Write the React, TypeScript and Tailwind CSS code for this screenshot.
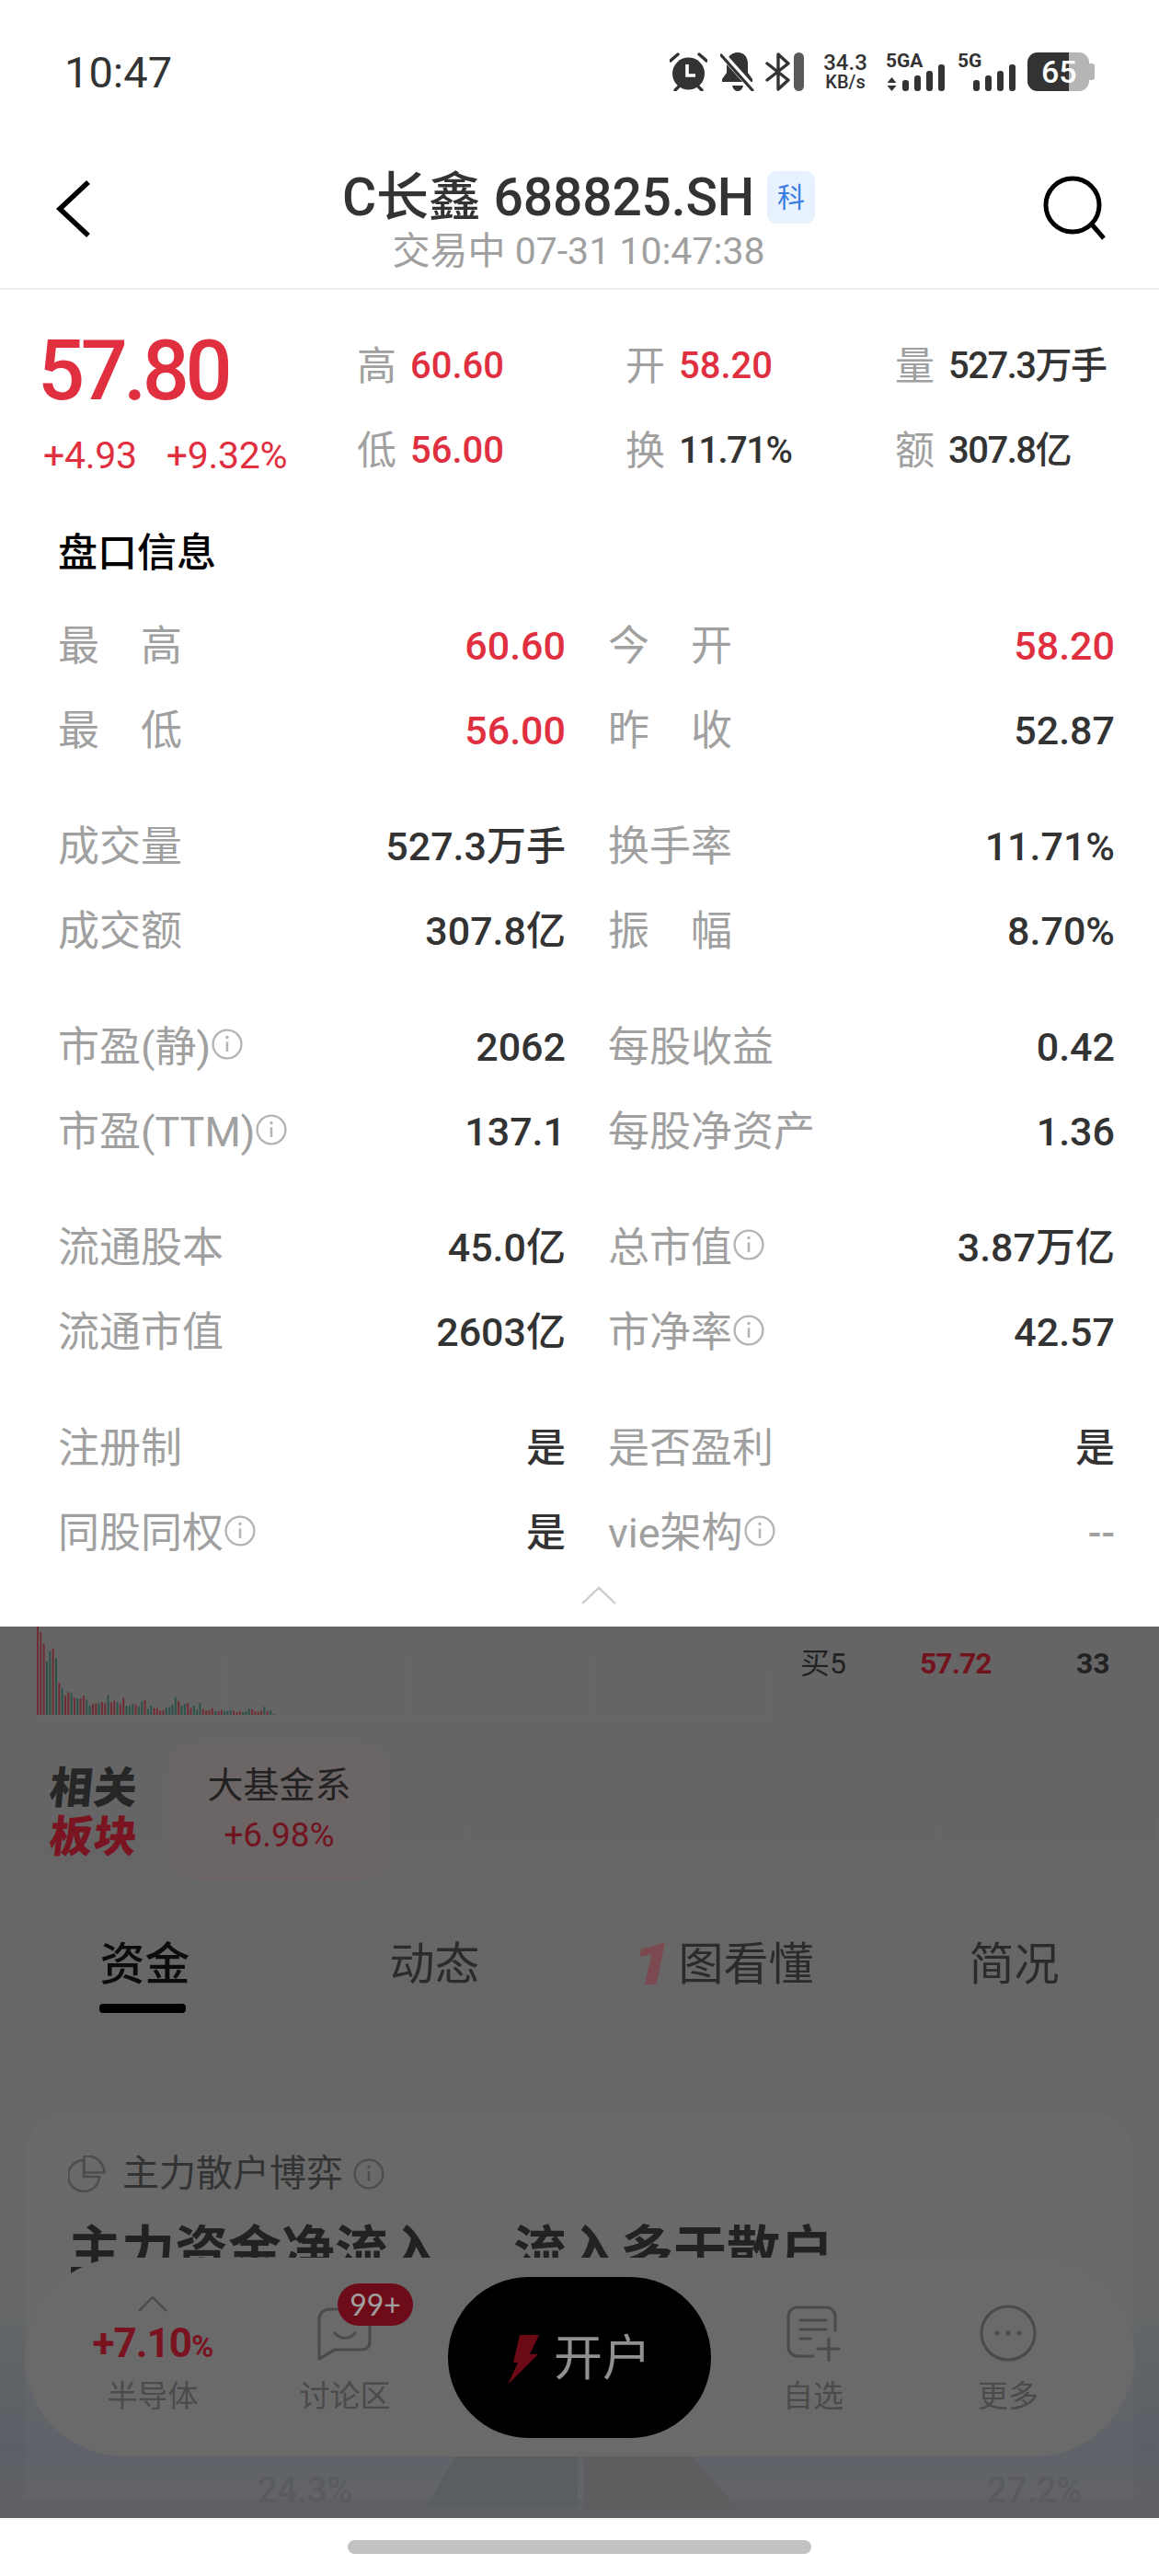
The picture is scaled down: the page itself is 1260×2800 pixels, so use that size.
import React from 'react'

const RED = 'text-[#e0303f]'

type Cell = { label: string; value: string; tip?: boolean; red?: boolean; muted?: boolean }

const groups: Cell[][] = [
  [
    { label: '最　高', value: '60.60', red: true },
    { label: '今　开', value: '58.20', red: true },
    { label: '最　低', value: '56.00', red: true },
    { label: '昨　收', value: '52.87' },
  ],
  [
    { label: '成交量', value: '527.3万手' },
    { label: '换手率', value: '11.71%' },
    { label: '成交额', value: '307.8亿' },
    { label: '振　幅', value: '8.70%' },
  ],
  [
    { label: '市盈(静)', value: '2062', tip: true },
    { label: '每股收益', value: '0.42' },
    { label: '市盈(TTM)', value: '137.1', tip: true },
    { label: '每股净资产', value: '1.36' },
  ],
  [
    { label: '流通股本', value: '45.0亿' },
    { label: '总市值', value: '3.87万亿', tip: true },
    { label: '流通市值', value: '2603亿' },
    { label: '市净率', value: '42.57', tip: true },
  ],
  [
    { label: '注册制', value: '是' },
    { label: '是否盈利', value: '是' },
    { label: '同股同权', value: '是', tip: true },
    { label: 'vie架构', value: '--', tip: true, muted: true },
  ],
]

// volume bars read off the chart: [height, r/g]
const volume: [number, string][] = [
  [296, 'r'], [270, 'r'], [232, 'r'], [175, 'g'], [208, 'g'], [217, 'r'], [184, 'g'], [105, 'r'], [86, 'g'], [62, 'r'],
  [74, 'r'], [70, 'g'], [56, 'r'], [53, 'g'], [53, 'r'], [62, 'r'], [50, 'g'], [30, 'g'], [35, 'r'], [38, 'r'],
  [38, 'g'], [42, 'r'], [38, 'r'], [65, 'g'], [40, 'r'], [46, 'r'], [42, 'g'], [35, 'r'], [56, 'r'], [30, 'g'],
  [30, 'g'], [36, 'g'], [34, 'r'], [28, 'g'], [44, 'g'], [48, 'r'], [20, 'g'], [30, 'g'], [22, 'r'], [22, 'r'],
  [15, 'r'], [15, 'r'], [24, 'g'], [26, 'g'], [33, 'g'], [58, 'g'], [45, 'r'], [30, 'g'], [36, 'g'], [38, 'r'],
  [22, 'r'], [30, 'g'], [18, 'g'], [38, 'g'], [18, 'r'], [14, 'r'], [16, 'r'], [22, 'r'], [12, 'g'], [12, 'r'],
  [16, 'r'], [12, 'g'], [12, 'g'], [16, 'g'], [14, 'r'], [9, 'r'], [12, 'r'], [9, 'g'], [12, 'g'], [20, 'g'],
  [18, 'r'], [12, 'r'], [9, 'r'], [14, 'r'], [26, 'g'], [12, 'r'], [14, 'g'], [3, 'g'],
]

const InfoIcon = ({ size = 32, color = '#b4b4b4' }: { size?: number; color?: string }) => (
  <svg width={size} height={size} viewBox="0 0 32 32" fill="none" stroke={color} className="shrink-0">
    <circle cx="16" cy="16" r="14.5" strokeWidth="2.2" />
    <path d="M16 13.5v10" strokeWidth="2.4" />
    <circle cx="16" cy="9" r="1.6" fill={color} stroke="none" />
  </svg>
)

const Signal = ({ label, arrows }: { label: string; arrows?: boolean }) => {
  const x0 = arrows ? 18 : 17
  const w = arrows ? 64 : 63
  return (
    <svg width={w} height="46" viewBox={`0 -4 ${w} 46`} fill="#333" className="-mt-[4px] [font-family:Roboto,sans-serif]">
      <text x="0" y="16" fontSize="21" fontWeight="700">{label}</text>
      {arrows && <path d="M6.5 27l5 6h-10zM6.5 42l-5-6h10z" />}
      {[30, 25, 20, 13].map((top, i) => (
        <rect key={i} x={x0 + i * 13} y={top} width="7" height={42 - top} rx="3" />
      ))}
    </svg>
  )
}

const StatusBar = () => (
  <div className="h-[156px] flex items-center pl-[70px] pr-[70px] text-[#333]">
    <span className="text-[47px] leading-none">10:47</span>
    <div className="ml-auto flex items-center h-[42px]">
      <svg width="41" height="42" viewBox="0 0 41 42" fill="#333">
        <circle cx="20.5" cy="23" r="17.5" />
        <path d="M1 9l8-7M40 9l-8-7M6 41l5-5M35 41l-5-5" stroke="#333" strokeWidth="3.4" strokeLinecap="round" />
        <path d="M19 13v12h9" fill="none" stroke="#fff" strokeWidth="3.6" />
      </svg>
      <svg width="38" height="42" viewBox="0 0 38 42" fill="#333" className="ml-[14px]">
        <path d="M19 0c7 0 11 5 11 12v10l5 7v3H2v-3l5-7V12C7 5 12 0 19 0z" />
        <path d="M13 36h12c-1 4-3 6-6 6s-5-2-6-6z" />
        <path d="M2 2l34 38" stroke="#fff" strokeWidth="7" />
        <path d="M1 3l34 38" stroke="#333" strokeWidth="3.2" strokeLinecap="round" />
      </svg>
      <svg width="27" height="42" viewBox="0 0 27 42" fill="none" stroke="#333" strokeWidth="3.4" strokeLinecap="round" strokeLinejoin="round" className="ml-[11px]">
        <path d="M2 12l23 18-11 10V2l11 10L2 30" />
      </svg>
      <div className="ml-[4px] w-[11px] h-[42px] rounded-full bg-[#5a5a5a]" />
      <div className="ml-[20px] w-[50px] flex flex-col items-center [font-family:Roboto,sans-serif] font-medium">
        <span className="text-[24px] leading-[23px]">34.3</span>
        <span className="text-[20px] leading-[19px]">KB/s</span>
      </div>
      <div className="ml-[19px]"><Signal label="5GA" arrows /></div>
      <div className="ml-[14px]"><Signal label="5G" /></div>
      <div className="ml-[13px] flex items-center">
        <div className="relative w-[67px] h-[42px] rounded-[11px] overflow-hidden bg-[#b5b5b5] flex">
          <div className="w-[45px] bg-[#333]" />
          <span className="absolute left-[15px] top-0 h-[42px] flex items-center text-[34px] font-medium text-white leading-none">65</span>
        </div>
        <div className="w-[6px] h-[18px] rounded-r-[3px] bg-[#b5b5b5]" />
      </div>
    </div>
  </div>
)

const Header = () => (
  <div className="h-[159px] border-b-[2px] border-[#eeeeee] flex pl-[60px] pr-[58px]">
    <svg width="40" height="64" viewBox="0 0 40 64" fill="none" stroke="#000" strokeWidth="5.5" className="mt-[39px] shrink-0">
      <path d="M36 3L5 32l31 29" />
    </svg>
    <div className="flex-1 flex flex-col items-center pt-[30px]">
      <div className="flex items-center h-[57px] ml-[24px]">
        <span className="text-[57px] leading-none font-medium text-[#333] tracking-[-0.2px]">C长鑫 688825.SH</span>
        <span className="ml-[14px] w-[52px] h-[57px] rounded-[10px] bg-[#e8f1fe] flex items-center justify-center text-[30px] text-[#3a7de0]">科</span>
      </div>
      <span className="mt-[8px] text-[41px] leading-[44px] text-[#a0a0a0] ml-[24px]">交易中 07-31 10:47:38</span>
    </div>
    <svg width="68" height="70" viewBox="0 0 68 70" fill="none" stroke="#000" strokeWidth="5" className="mt-[35px] shrink-0">
      <circle cx="32" cy="32" r="29" />
      <path d="M53 53l13 15" />
    </svg>
  </div>
)

const Stat = ({ label, value, red, small }: { label: string; value: string; red?: boolean; small?: boolean }) => (
  <div className="h-[92px] flex items-center">
    <span className="w-[58px] text-[43px] text-[#a0a0a0] leading-none">{label}</span>
    <span className={`text-[40px] font-medium leading-none ${red ? RED : 'text-[#333]'} ${small ? 'tracking-[-1.5px]' : ''}`}>{value}</span>
  </div>
)

const Quote = () => (
  <div className="pt-[37px] pl-[41px] flex">
    <div className="w-[347px] shrink-0">
      <div className={`h-[100px] flex items-center mt-[2px] text-[90px] leading-none font-medium tracking-[-4.5px] ${RED}`}>57.80</div>
      <div className={`mt-[6px] h-[71px] flex items-center pl-[6px] gap-[32px] text-[41px] leading-none -tracking-[0.3px] ${RED}`}>
        <span>+4.93</span>
        <span>+9.32%</span>
      </div>
    </div>
    <div className="grid grid-cols-[292px_293px_1fr] flex-1">
      <Stat label="高" value="60.60" red />
      <Stat label="开" value="58.20" red />
      <Stat label="量" value="527.3万手" small />
      <Stat label="低" value="56.00" red />
      <Stat label="换" value="11.71%" small />
      <Stat label="额" value="307.8亿" small />
    </div>
  </div>
)

const Row = ({ cell }: { cell: Cell }) => (
  <div className="h-[92.5px] flex items-center justify-between">
    <div className="flex items-center text-[#a0a0a0] text-[45px] leading-none">
      <span>{cell.label}</span>
      {cell.tip && (
        <span className="ml-[1px] -mt-[6px]">
          <InfoIcon size={34} />
        </span>
      )}
    </div>
    <span className={`text-[43px] leading-none font-medium ${cell.red ? RED : cell.muted ? 'text-[#a0a0a0]' : 'text-[#333]'}`}>
      {cell.value}
    </span>
  </div>
)

const Table = () => (
  <div className="pl-[63px] pr-[48px]">
    <h2 className="h-[60px] mt-[35px] flex items-center text-[43px] font-medium text-black leading-none">盘口信息</h2>
    <div className="mt-[25px] flex flex-col gap-[33px]">
      {groups.map((cells, i) => (
        <div key={i} className="grid grid-cols-[552px_551px] gap-x-[46px]">
          {cells.map((c, j) => (
            <Row key={j} cell={c} />
          ))}
        </div>
      ))}
    </div>
    <div className="h-[41px] flex items-center justify-center ml-[26px]">
      <svg width="38" height="20" viewBox="0 0 38 20" fill="none" stroke="#cccccc" strokeWidth="2.4">
        <path d="M1 19L19 2l18 17" />
      </svg>
    </div>
  </div>
)

const VolumeChart = () => (
  <svg width="800" height="97" viewBox="0 0 800 97" className="shrink-0">
    {[200, 400, 600, 799].map((x) => (
      <rect key={x} x={x} y="0" width="1" height="96" fill="#686868" />
    ))}
    <rect x="0" y="96" width="800" height="1" fill="#686868" />
    {volume.map(([h, c], i) => (
      <rect key={i} x={i * 3.33} y={96 - h / 3} width="2" height={h / 3} fill={c === 'r' ? '#6f2c33' : '#2c5148'} />
    ))}
  </svg>
)

const Tabs = () => (
  <div className="grid grid-cols-4 items-start justify-items-center pt-[38px] h-[222px] text-[49px] leading-[50px] text-[#2b2b2b]">
    <div className="flex flex-col items-center">
      <span className="text-[#0c0c0c] font-medium">资金</span>
      <div className="mt-[17px] mr-[6px] w-[94px] h-[10px] rounded-[4px] bg-black" />
    </div>
    <span>动态</span>
    <span className="flex items-center whitespace-nowrap">
      <span className="inline-block scale-x-125 text-[62px] font-black italic text-[#7b4a50] mr-[12px] leading-[50px] [font-family:Roboto,sans-serif]">1</span>
      图看懂
    </span>
    <span>简况</span>
  </div>
)

const FundCard = () => (
  <div className="mx-[27px] rounded-t-[50px] h-[420px] bg-[#ffffff05] pl-[47px] pt-[48px] overflow-hidden">
    <div className="flex items-center h-[40px] text-[40px] leading-none text-[#333]">
      <svg width="41" height="40" viewBox="0 0 41 40" fill="none" stroke="#4d4d4d" strokeWidth="2.6" className="shrink-0">
        <path d="M17 5A17 17 0 1 0 34 23H17z" />
        <path d="M17.5 1v18h22A19 19 0 0 0 24 1z" transform="translate(0 -0.5)" />
      </svg>
      <span className="ml-[18px]">主力散户博弈</span>
      <span className="ml-[11px]">
        <InfoIcon size={34} color="#4d4d4d" />
      </span>
    </div>
    <div className="mt-[34px] text-[58px] leading-[60px] font-bold text-[#222] whitespace-nowrap">
      主力资金净流入<span className="ml-[78px]">流入多于散户</span>
    </div>
  </div>
)

const NavItem = ({ label, children }: { label: string; children: React.ReactNode }) => (
  <div className="flex flex-col items-center">
    <div className="h-[112px] flex items-center justify-center">{children}</div>
    <span className="text-[33px] leading-[36px] text-[#4b4b4b]">{label}</span>
  </div>
)

const BottomBar = () => (
  <div className="absolute left-[27px] top-[686px] w-[1206px] h-[216px] rounded-[108px] bg-[#6a6a6a] flex items-start pt-[21px]">
    <div className="w-[460px] shrink-0 flex">
      <div className="w-[278px] flex justify-center">
        <NavItem label="半导体">
          <div className="flex flex-col items-center pt-[6px]">
            <svg width="32" height="18" viewBox="0 0 32 18" fill="none" stroke="#4b4b4b" strokeWidth="2.4">
              <path d="M1 17L16 2l15 15" />
            </svg>
            <span className="mt-[12px] text-[44px] leading-[44px] font-bold text-[#7a1320] tracking-[-1px] whitespace-nowrap">
              +7.10<span className="text-[33px]">%</span>
            </span>
          </div>
        </NavItem>
      </div>
      <div className="relative w-[140px] flex justify-center">
        <NavItem label="讨论区">
          <svg width="62" height="60" viewBox="0 0 62 60" fill="none" stroke="#4b4b4b" strokeWidth="3.2" strokeLinecap="round" strokeLinejoin="round" className="mt-[12px]">
            <path d="M14 3h36a8 8 0 0 1 8 8v28a8 8 0 0 1-8 8H20L3 57V14a11 11 0 0 1 11-11z" />
            <path d="M20 29c6 7 16 7 22 0" />
          </svg>
        </NavItem>
        <div className="absolute left-[62px] top-[7px] w-[82px] h-[46px] rounded-full bg-[#6d0c18] flex items-center justify-center text-[32px] leading-none text-[#a0a0a0] [font-family:Lato,sans-serif]">
          99+
        </div>
      </div>
    </div>
    <div className="w-[286px] h-[175px] rounded-[88px] bg-black flex items-center justify-center gap-[16px] shrink-0 pt-[4px] pl-[10px]">
      <svg width="34" height="54" viewBox="0 0 34 54" fill="#6b0a15" className="-ml-[10px]">
        <path d="M13 0h21L24 21h9L0 54l11-24H6z" />
      </svg>
      <span className="text-[53px] leading-none text-[#909090]">开户</span>
    </div>
    <div className="flex-1 flex">
      <div className="w-[222px] flex justify-center">
        <NavItem label="自选">
          <svg width="60" height="62" viewBox="0 0 60 62" fill="none" stroke="#4b4b4b" strokeWidth="3.2" strokeLinecap="round" className="mt-[10px]">
            <path d="M54 28V13A10 10 0 0 0 44 3H13A10 10 0 0 0 3 13v33a10 10 0 0 0 10 10h17" />
            <path d="M16 17h28M16 27h28M16 37h11M35 48h23M47 37v24" />
          </svg>
        </NavItem>
      </div>
      <div className="w-[202px] flex justify-center">
        <NavItem label="更多">
          <svg width="62" height="62" viewBox="0 0 62 62" fill="none" className="mt-[10px]">
            <circle cx="31" cy="31" r="29" stroke="#4b4b4b" strokeWidth="3.2" />
            <circle cx="19" cy="31" r="2.6" fill="#4b4b4b" />
            <circle cx="31" cy="31" r="2.6" fill="#4b4b4b" />
            <circle cx="43" cy="31" r="2.6" fill="#4b4b4b" />
          </svg>
        </NavItem>
      </div>
    </div>
  </div>
)

const DimSection = () => (
  <div className="relative h-[969px] overflow-hidden bg-[linear-gradient(to_bottom,#656565_0%,#666666_53%,#646667_76%,#5b5e65_92%,#606164_100%)]">
    <div className="h-[127px] pl-[40px] flex items-start">
      <VolumeChart />
      <div className="h-[80px] flex items-center text-[32px] font-medium leading-none">
        <span className="ml-[30px] w-[130px] text-[#222] font-normal">买5</span>
        <span className="w-[170px] text-[#72141f] font-bold tracking-[-1px]">57.72</span>
        <span className="text-[#222] font-bold">33</span>
      </div>
    </div>
    <div className="flex h-[148px] pl-[54px]">
      <div className="w-[129px] flex flex-col justify-center pt-[2px] text-[47px] leading-[53px] font-black tracking-[1px]">
        <span className="-skew-x-6 text-[#262626]">相关</span>
        <span className="-skew-x-6 text-[#7a1420]">板块</span>
      </div>
      <div className="w-[241px] rounded-[30px] bg-[#6c6565] flex flex-col items-center justify-center gap-[16px] pb-[4px]">
        <span className="text-[39px] leading-[40px] text-[#222]">大基金系</span>
        <span className="text-[37px] leading-[36px] text-[#72141f]">+6.98%</span>
      </div>
    </div>
    <div className="mt-[30px] rounded-t-[60px] bg-[#ffffff03]">
      <Tabs />
      <FundCard />
    </div>
    <svg width="1260" height="67" viewBox="0 0 1260 67" className="absolute left-0 bottom-0">
      <path d="M495 0h133v55H463z" fill="#5a5e61" />
      <path d="M635 0h118l50 58H635z" fill="#5f5d60" />
      <text x="280" y="50" fontSize="38" fill="#5a5b5f" fontWeight="500">24.3%</text>
      <text x="1073" y="50" fontSize="38" fill="#5a5b5f" fontWeight="500">27.2%</text>
    </svg>
    <BottomBar />
  </div>
)

export default function App() {
  return (
    <div className="w-[1260px] h-[2800px] overflow-hidden bg-white [font-family:Roboto,'Noto_Sans_CJK_SC',sans-serif]">
      <StatusBar />
      <Header />
      <div className="h-[1453px]">
        <Quote />
        <Table />
      </div>
      <DimSection />
      <div className="h-[63px] flex justify-center pt-[24px]">
        <div className="w-[504px] h-[15px] rounded-full bg-[#c2c2c2]" />
      </div>
    </div>
  )
}
